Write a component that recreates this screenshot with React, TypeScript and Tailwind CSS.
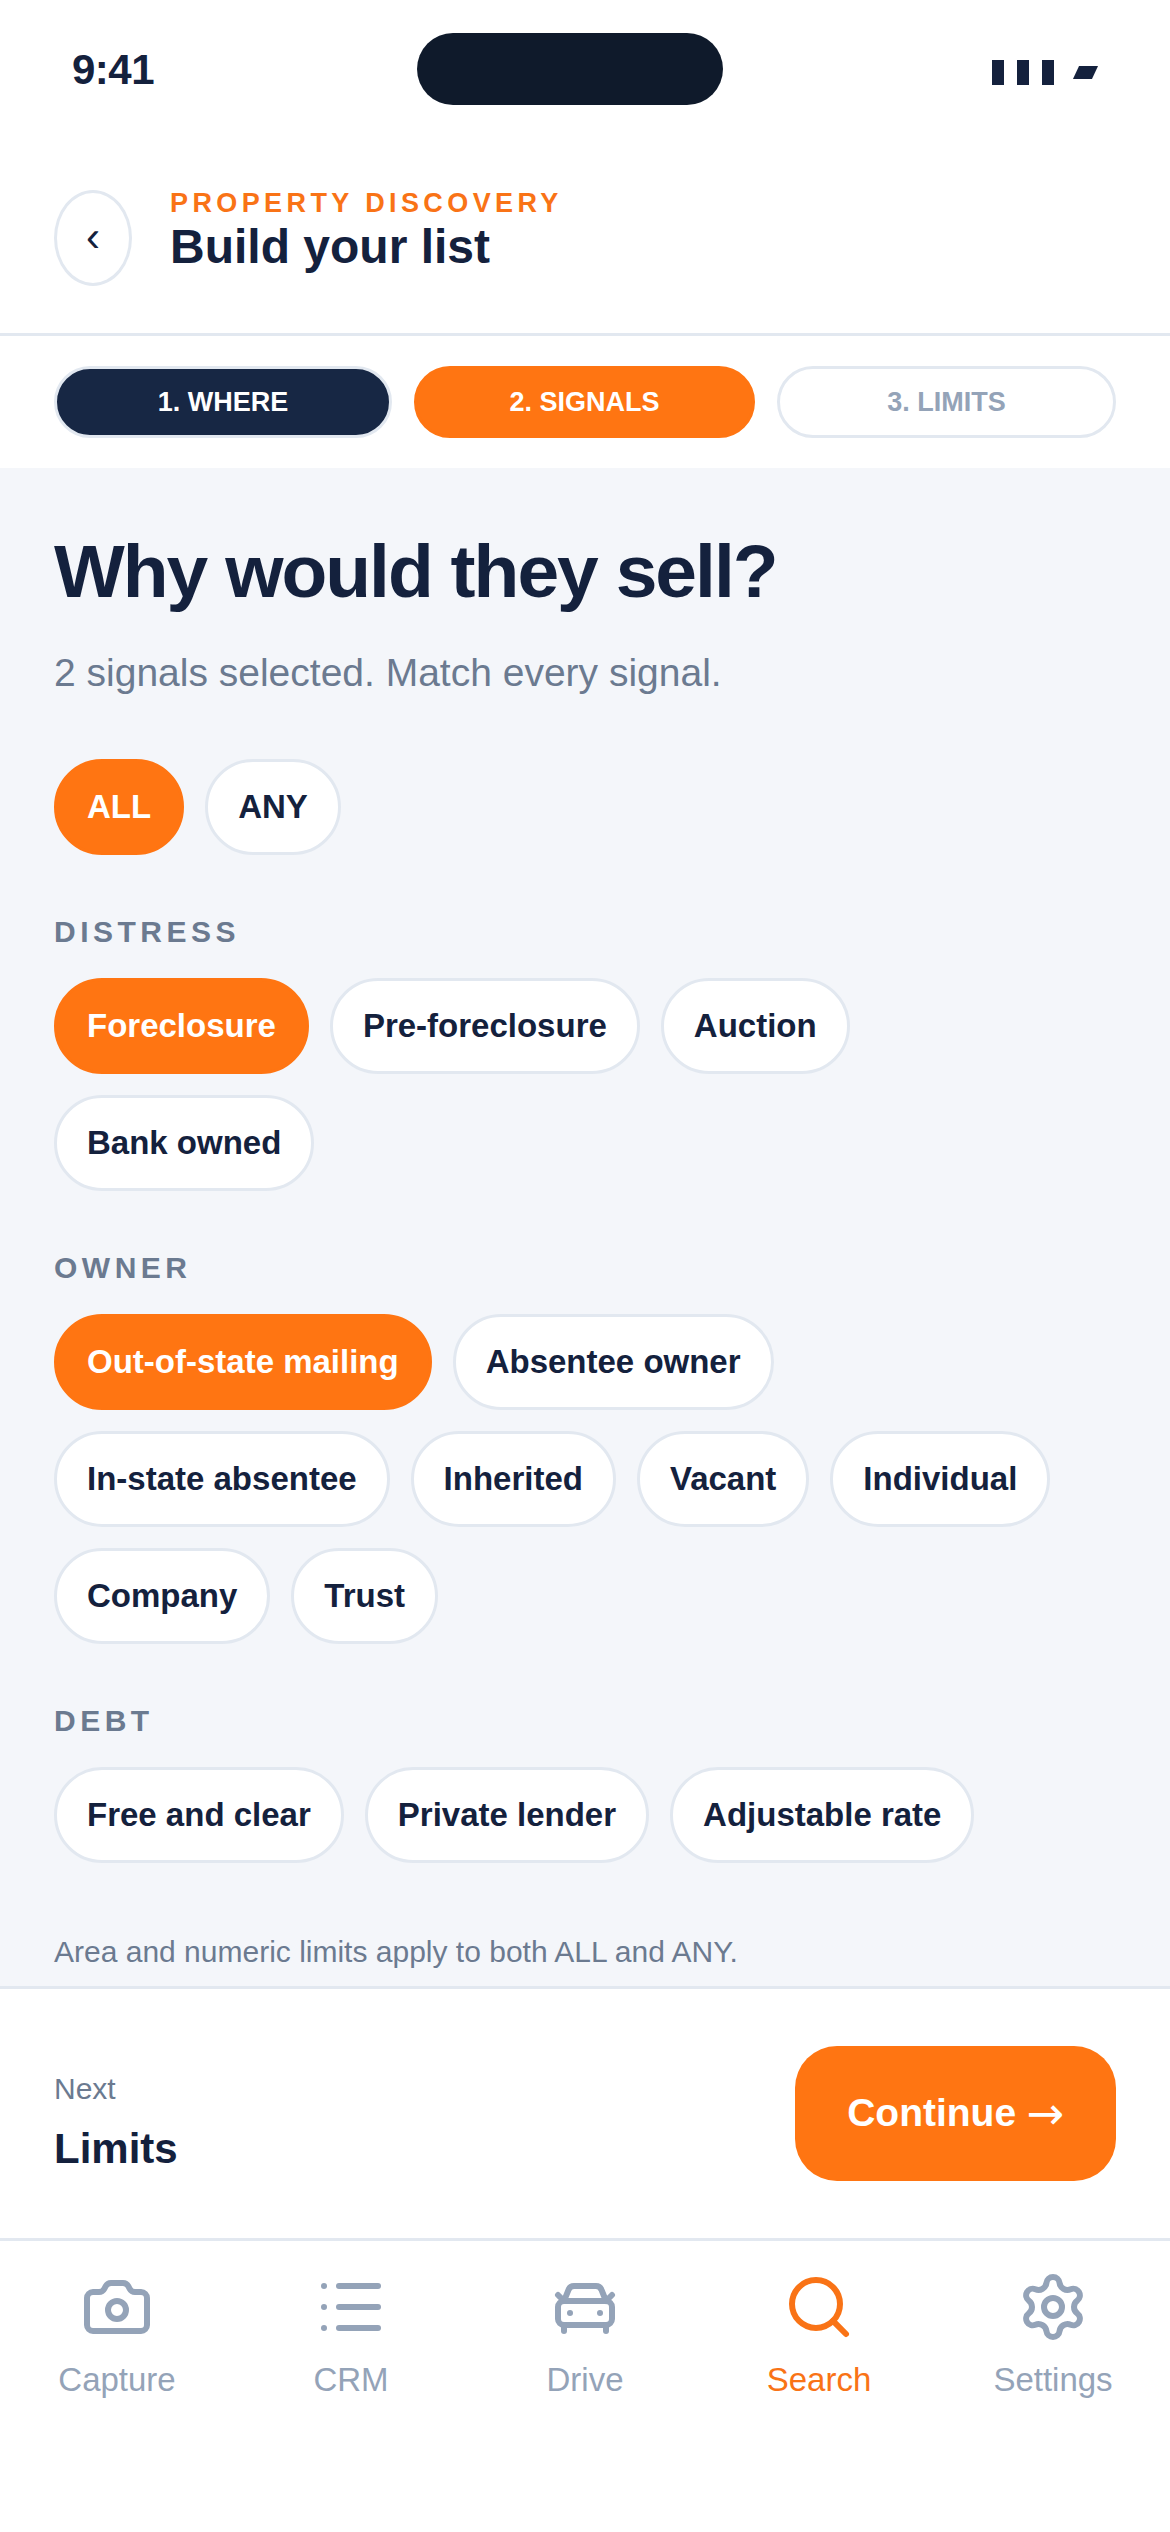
import { Camera, CarFront, List, Search } from "lucide-react";

const GROUPS = [
  { title: "DISTRESS", chips: ["Foreclosure", "Pre-foreclosure", "Auction", "Bank owned"] },
  {
    title: "OWNER",
    chips: [
      "Out-of-state mailing",
      "Absentee owner",
      "In-state absentee",
      "Inherited",
      "Vacant",
      "Individual",
      "Company",
      "Trust",
    ],
  },
  { title: "DEBT", chips: ["Free and clear", "Private lender", "Adjustable rate"] },
];

const SELECTED = ["Foreclosure", "Out-of-state mailing"];

// six round lobes joined by soft valleys, in a 24 unit box
function gearPath() {
  const lobeR = 2.2;
  const valleyR = 2.67;
  const lobeAt = 7.8;
  const valleyAt = 9.67;
  const polar = (r: number, deg: number) => {
    const a = (deg * Math.PI) / 180;
    return [12 + r * Math.cos(a), 12 + r * Math.sin(a)];
  };
  const touch = (lobeDeg: number, valleyDeg: number) => {
    const l = polar(lobeAt, lobeDeg);
    const v = polar(valleyAt, valleyDeg);
    const t = lobeR / (lobeR + valleyR);
    return `${(l[0] + (v[0] - l[0]) * t).toFixed(3)} ${(l[1] + (v[1] - l[1]) * t).toFixed(3)}`;
  };
  let d = `M${touch(-90, -120)}`;
  for (let k = 0; k < 6; k++) {
    const deg = -90 + 60 * k;
    d += ` A${lobeR} ${lobeR} 0 0 1 ${touch(deg, deg + 30)}`;
    d += ` A${valleyR} ${valleyR} 0 0 0 ${touch(deg + 60, deg + 30)}`;
  }
  return d + "Z";
}

function Gear({ size }: { size: number }) {
  return (
    <svg width={size} height={size} viewBox="0 0 24 24" fill="none" stroke="currentColor" strokeWidth={2}>
      <path d={gearPath()} strokeLinejoin="round" />
      <circle cx={12} cy={12} r={3} />
    </svg>
  );
}

const NAV = [
  { label: "Capture", icon: Camera },
  { label: "CRM", icon: List },
  { label: "Drive", icon: CarFront },
  { label: "Search", icon: Search, active: true },
  { label: "Settings", icon: Gear },
];

function Chip({ label, active }: { label: string; active?: boolean }) {
  return (
    <div
      className={`flex h-[96px] items-center rounded-full border-[3px] px-[30px] text-[33px] font-bold ${
        active
          ? "border-[#ff7512] bg-[#ff7512] text-white"
          : "border-[#e2e8f0] bg-white text-[#14213d]"
      }`}
    >
      {label}
    </div>
  );
}

export default function App() {
  return (
    <div className="flex h-[2532px] w-[1170px] flex-col overflow-hidden bg-white font-['Liberation_Sans',Arial,sans-serif] text-[#14213d]">
      {/* Status bar */}
      <div className="flex h-[142px] shrink-0 items-start pl-[72px] pr-[72px] pt-[33px]">
        <div className="flex h-[72px] w-[345px] items-center text-[42px] font-bold tracking-[-0.5px]">9:41</div>
        <div className="h-[72px] w-[306px] rounded-full bg-[#0f1a2b]" />
        <div className="flex h-[72px] flex-1 items-center justify-end pt-[7px]">
          <div className="flex gap-[13px]">
            <div className="h-[25px] w-[12px] bg-[#14213d]" />
            <div className="h-[25px] w-[12px] bg-[#14213d]" />
            <div className="h-[25px] w-[12px] bg-[#14213d]" />
          </div>
          <div className="ml-[22px] mr-[3px] h-[13px] w-[19px] -skew-x-[25deg] bg-[#14213d]" />
        </div>
      </div>

      {/* Header */}
      <div className="flex shrink-0 items-start gap-[38px] border-b-[3px] border-[#e2e8f0] px-[54px] pb-[47px] pt-[48px]">
        <div className="flex h-[96px] w-[78px] items-center justify-center rounded-[50%] border-[3px] border-[#e2e8f0] pb-[2px] text-[42px] font-normal leading-none">
          ‹
        </div>
        <div>
          <div className="text-[27px] font-bold leading-[27px] tracking-[4.4px] text-[#f97316]">
            PROPERTY DISCOVERY
          </div>
          <div className="mt-[3px] text-[48px] font-bold leading-[54px]">Build your list</div>
        </div>
      </div>

      {/* Steps */}
      <div className="grid shrink-0 grid-cols-[338px_341px_339px] gap-[22px] px-[54px] py-[30px]">
        <div className="flex h-[72px] items-center justify-center rounded-full border-[3px] border-[#e2e8f0] bg-[#172744] text-[27px] font-bold text-white">
          1. WHERE
        </div>
        <div className="flex h-[72px] items-center justify-center rounded-full border-[3px] border-[#ff7512] bg-[#ff7512] text-[27px] font-bold text-white">
          2. SIGNALS
        </div>
        <div className="flex h-[72px] items-center justify-center rounded-full border-[3px] border-[#e2e8f0] bg-white text-[27px] font-bold text-[#94a3b8]">
          3. LIMITS
        </div>
      </div>

      {/* Main */}
      <div className="min-h-0 flex-1 bg-[#f4f6fa] px-[54px] pt-[55px]">
        <h1 className="text-[75px] font-bold leading-[96px] tracking-[-2px]">Why would they sell?</h1>
        <p className="mt-[30px] text-[39px] leading-[48px] text-[#6b7a90]">
          2 signals selected. Match every signal.
        </p>
        <div className="mt-[62px] flex gap-[21px]">
          <Chip label="ALL" active />
          <Chip label="ANY" />
        </div>
        {GROUPS.map((g) => (
          <div key={g.title} className="mt-[59px]">
            <div className="text-[30px] font-bold leading-[36px] tracking-[0.15em] text-[#6b7a90]">
              {g.title}
            </div>
            <div className="mt-[28px] flex flex-wrap gap-[21px]">
              {g.chips.map((c) => (
                <Chip key={c} label={c} active={SELECTED.includes(c)} />
              ))}
            </div>
          </div>
        ))}
        <p className="mt-[71px] text-[30px] leading-[36px] text-[#6b7a90]">
          Area and numeric limits apply to both ALL and ANY.
        </p>
      </div>

      {/* Next bar */}
      <div className="flex h-[255px] shrink-0 items-center justify-between border-y-[3px] border-[#e2e8f0] pl-[54px] pr-[54px]">
        <div className="pt-[18px]">
          <div className="text-[30px] leading-[36px] text-[#6b7a90]">Next</div>
          <div className="mt-[17px] text-[42px] font-bold leading-[50px]">Limits</div>
        </div>
        <div className="flex h-[135px] w-[321px] items-center justify-center rounded-[42px] bg-[#ff7512] text-[39px] font-bold text-white">
          Continue
          <span className="ml-[10px] font-['DejaVu_Sans',sans-serif] text-[45px] font-normal leading-none">→</span>
        </div>
      </div>

      {/* Tab bar */}
      <div className="grid h-[291px] shrink-0 grid-cols-5 pt-[30px]">
        {NAV.map((n) => (
          <div
            key={n.label}
            className={`flex flex-col items-center ${n.active ? "text-[#f97316]" : "text-[#94a3b8]"}`}
          >
            <n.icon size={72} />
            <div className="mt-[17px] text-[33px] leading-[40px]">{n.label}</div>
          </div>
        ))}
      </div>
    </div>
  );
}
